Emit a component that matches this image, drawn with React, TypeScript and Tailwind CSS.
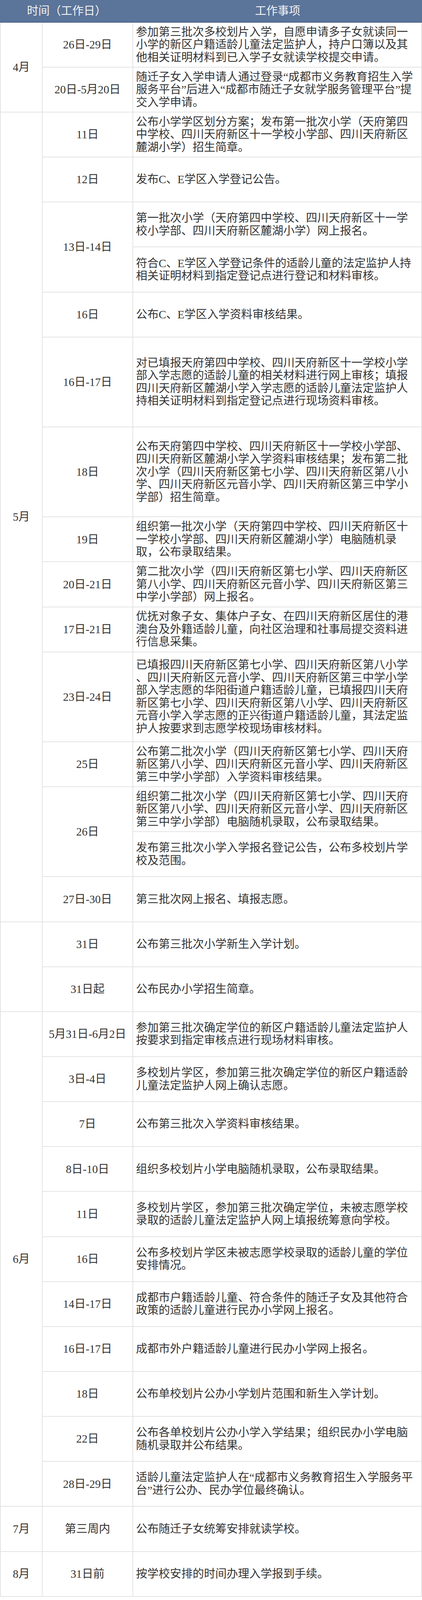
// The browser window is 4096px tall, so the table's vertical sizes are the
// reference's scaled by 4096/4540 so that the whole table fits on the page.
type Sub = { lines: string[]; span?: number };
type Entry = { date: string; subs: Sub[] };
type Section = { month: string; entries: Entry[] };

const one = (...lines: string[]): Sub[] => [{ lines }];
const tall = (...lines: string[]): Sub[] => [{ lines, span: 2 }];

const sections: Section[] = [
  {
    month: "4月",
    entries: [
      {
        date: "26日-29日",
        subs: one(
          "参加第三批次多校划片入学，自愿申请多子女就读同一",
          "小学的新区户籍适龄儿童法定监护人，持户口簿以及其",
          "他相关证明材料到已入学子女就读学校提交申请。"
        ),
      },
      {
        date: "20日-5月20日",
        subs: one(
          "随迁子女入学申请人通过登录“成都市义务教育招生入学",
          "服务平台”后进入“成都市随迁子女就学服务管理平台”提",
          "交入学申请。"
        ),
      },
    ],
  },
  {
    month: "5月",
    entries: [
      {
        date: "11日",
        subs: one(
          "公布小学学区划分方案；发布第一批次小学（天府第四",
          "中学校、四川天府新区十一学校小学部、四川天府新区",
          "麓湖小学）招生简章。"
        ),
      },
      { date: "12日", subs: one("发布C、E学区入学登记公告。") },
      {
        date: "13日-14日",
        subs: [
          {
            lines: [
              "第一批次小学（天府第四中学校、四川天府新区十一学",
              "校小学部、四川天府新区麓湖小学）网上报名。",
            ],
          },
          {
            lines: [
              "符合C、E学区入学登记条件的适龄儿童的法定监护人持",
              "相关证明材料到指定登记点进行登记和材料审核。",
            ],
          },
        ],
      },
      { date: "16日", subs: one("公布C、E学区入学资料审核结果。") },
      {
        date: "16日-17日",
        subs: tall(
          "对已填报天府第四中学校、四川天府新区十一学校小学",
          "部入学志愿的适龄儿童的相关材料进行网上审核；填报",
          "四川天府新区麓湖小学入学志愿的适龄儿童法定监护人",
          "持相关证明材料到指定登记点进行现场资料审核。"
        ),
      },
      {
        date: "18日",
        subs: tall(
          "公布天府第四中学校、四川天府新区十一学校小学部、",
          "四川天府新区麓湖小学入学资料审核结果；发布第二批",
          "次小学（四川天府新区第七小学、四川天府新区第八小",
          "学、四川天府新区元音小学、四川天府新区第三中学小",
          "学部）招生简章。"
        ),
      },
      {
        date: "19日",
        subs: one(
          "组织第一批次小学（天府第四中学校、四川天府新区十",
          "一学校小学部、四川天府新区麓湖小学）电脑随机录",
          "取，公布录取结果。"
        ),
      },
      {
        date: "20日-21日",
        subs: one(
          "第二批次小学（四川天府新区第七小学、四川天府新区",
          "第八小学、四川天府新区元音小学、四川天府新区第三",
          "中学小学部）网上报名。"
        ),
      },
      {
        date: "17日-21日",
        subs: one(
          "优抚对象子女、集体户子女、在四川天府新区居住的港",
          "澳台及外籍适龄儿童，向社区治理和社事局提交资料进",
          "行信息采集。"
        ),
      },
      {
        date: "23日-24日",
        subs: tall(
          "已填报四川天府新区第七小学、四川天府新区第八小学",
          "、四川天府新区元音小学、四川天府新区第三中学小学",
          "部入学志愿的华阳街道户籍适龄儿童，已填报四川天府",
          "新区第七小学、四川天府新区第八小学、四川天府新区",
          "元音小学入学志愿的正兴街道户籍适龄儿童，其法定监",
          "护人按要求到志愿学校现场审核材料。"
        ),
      },
      {
        date: "25日",
        subs: one(
          "公布第二批次小学（四川天府新区第七小学、四川天府",
          "新区第八小学、四川天府新区元音小学、四川天府新区",
          "第三中学小学部）入学资料审核结果。"
        ),
      },
      {
        date: "26日",
        subs: [
          {
            lines: [
              "组织第二批次小学（四川天府新区第七小学、四川天府",
              "新区第八小学、四川天府新区元音小学、四川天府新区",
              "第三中学小学部）电脑随机录取，公布录取结果。",
            ],
          },
          {
            lines: [
              "发布第三批次小学入学报名登记公告，公布多校划片学",
              "校及范围。",
            ],
          },
        ],
      },
      { date: "27日-30日", subs: one("第三批次网上报名、填报志愿。") },
    ],
  },
  {
    month: "",
    entries: [
      { date: "31日", subs: one("公布第三批次小学新生入学计划。") },
      { date: "31日起", subs: one("公布民办小学招生简章。") },
    ],
  },
  {
    month: "6月",
    entries: [
      {
        date: "5月31日-6月2日",
        subs: one(
          "参加第三批次确定学位的新区户籍适龄儿童法定监护人",
          "按要求到指定审核点进行现场材料审核。"
        ),
      },
      {
        date: "3日-4日",
        subs: one(
          "多校划片学区，参加第三批次确定学位的新区户籍适龄",
          "儿童法定监护人网上确认志愿。"
        ),
      },
      { date: "7日", subs: one("公布第三批次入学资料审核结果。") },
      { date: "8日-10日", subs: one("组织多校划片小学电脑随机录取，公布录取结果。") },
      {
        date: "11日",
        subs: one(
          "多校划片学区，参加第三批次确定学位，未被志愿学校",
          "录取的适龄儿童法定监护人网上填报统筹意向学校。"
        ),
      },
      {
        date: "16日",
        subs: one(
          "公布多校划片学区未被志愿学校录取的适龄儿童的学位",
          "安排情况。"
        ),
      },
      {
        date: "14日-17日",
        subs: one(
          "成都市户籍适龄儿童、符合条件的随迁子女及其他符合",
          "政策的适龄儿童进行民办小学网上报名。"
        ),
      },
      { date: "16日-17日", subs: one("成都市外户籍适龄儿童进行民办小学网上报名。") },
      { date: "18日", subs: one("公布单校划片公办小学划片范围和新生入学计划。") },
      {
        date: "22日",
        subs: one(
          "公布各单校划片公办小学入学结果；组织民办小学电脑",
          "随机录取并公布结果。"
        ),
      },
      {
        date: "28日-29日",
        subs: one(
          "适龄儿童法定监护人在“成都市义务教育招生入学服务平",
          "台”进行公办、民办学位最终确认。"
        ),
      },
    ],
  },
  {
    month: "7月",
    entries: [{ date: "第三周内", subs: one("公布随迁子女统筹安排就读学校。") }],
  },
  {
    month: "8月",
    entries: [{ date: "31日前", subs: one("按学校安排的时间办理入学报到手续。") }],
  },
];

const line = "border-[#e4e4e4]";

const App = () => {
  return (
    <div
      lang="zh-CN"
      className="w-[1080px] bg-white text-[29px] leading-[32.5px] text-[#333333]"
      style={{ fontFamily: '"Liberation Serif", "Noto Sans CJK SC", serif' }}
    >
      {/* header */}
      <div className="flex h-[57.74px] bg-[#5b7499] text-[#f3f3f3] border-b-2 border-[#4a6185]">
        <div className="w-[341px] flex items-center justify-center">时间（工作日）</div>
        <div className="flex-1 flex items-center justify-center">工作事项</div>
      </div>

      <div className={`border-l-2 ${line}`}>
        {sections.map((section, si) => (
          <div key={si} className="flex">
            <div
              className={`w-[107px] shrink-0 flex items-center justify-center border-r-2 border-b-2 ${line}`}
            >
              {section.month}
            </div>
            <div className="flex-1 flex flex-col">
              {section.entries.map((entry, ei) => (
                <div key={ei} className="flex">
                  <div
                    className={`w-[232px] shrink-0 flex items-center justify-center whitespace-nowrap border-r-2 border-b-2 ${line}`}
                  >
                    {entry.date}
                  </div>
                  <div className="flex-1 flex flex-col">
                    {entry.subs.map((sub, i) => (
                      <div
                        key={i}
                        className={`${
                          sub.span === 2 ? "h-[230.3px]" : "h-[115.15px]"
                        } flex flex-col justify-center pl-[7px] border-r-2 border-b-2 ${line}`}
                      >
                        {sub.lines.map((t, j) => (
                          <span key={j} className="block h-[32.5px] whitespace-nowrap">
                            {t}
                          </span>
                        ))}
                      </div>
                    ))}
                  </div>
                </div>
              ))}
            </div>
          </div>
        ))}
      </div>
    </div>
  );
};

export default App;
